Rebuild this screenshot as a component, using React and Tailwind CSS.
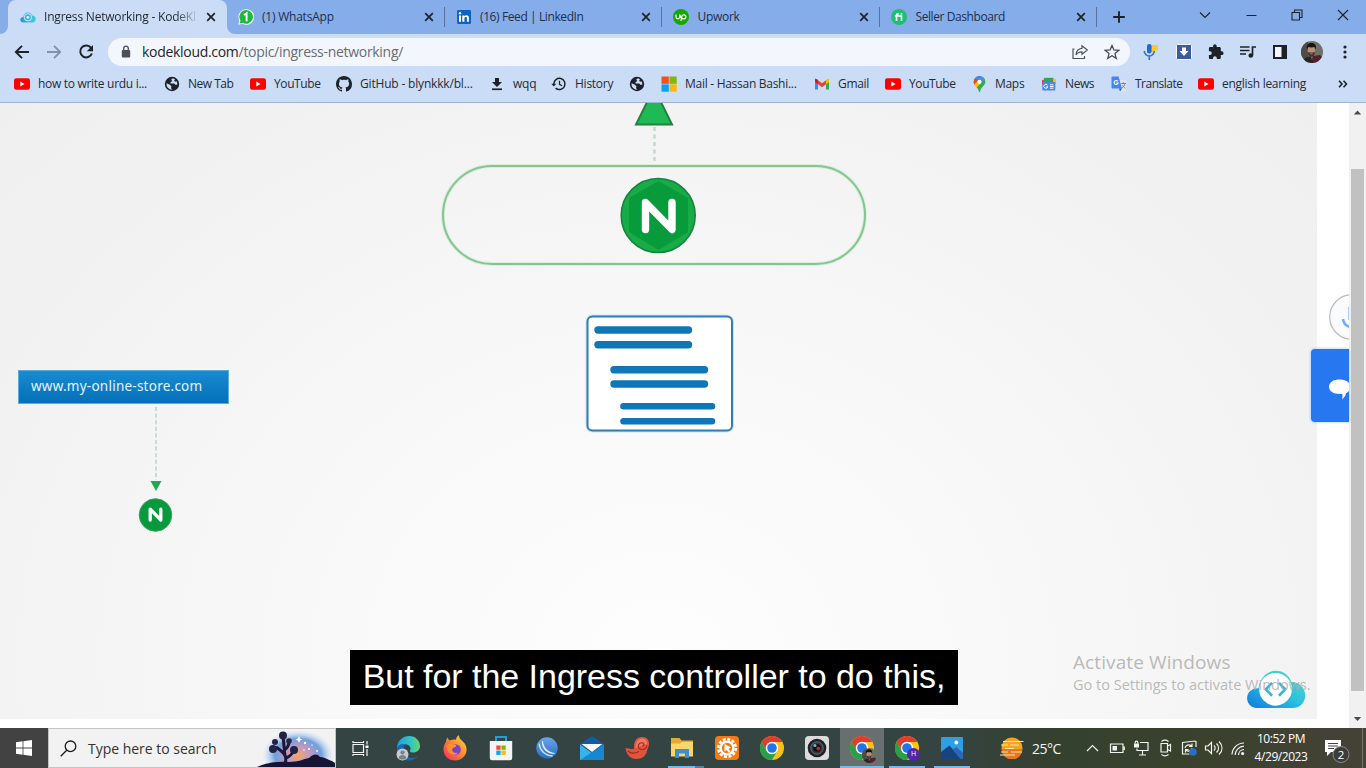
import React from "react";

const INK = "#1d2229";

function YouTube() {
  return (
    <svg width="16" height="16" viewBox="0 0 16 16">
      <rect y="2.2" width="16" height="11.6" rx="2.2" fill="#f00" />
      <path d="M6.3 5.6v4.8l4.2-2.4z" fill="#fff" />
    </svg>
  );
}

function Globe() {
  return (
    <svg width="16" height="16" viewBox="0 0 16 16">
      <circle cx="8" cy="8" r="7.2" fill={INK} />
      <path d="M8.500 2.300c1.500 0 3 .6 3.900 1.700-.4.900-1.400 1-1.900 1.700-.3.900-1.500.9-1.500 1.900.2.800 1.400.7 1.800 1.300" fill="none" stroke="#cbdcf6" strokeWidth="0" />
      <path d="M9 2.300 7.200 3.500l1 1.500-1.700 1.300v1.200h3.700l1.200 1.300h1.800a5.500 5.500 0 0 0-.6-3.600l-1.500.6-1-1.200 1-1.200z" fill="#cbdcf6" />
      <path d="M2.500 7.300 6 8.800l1.500 1.700-.5 1.300 1 1.900A5.700 5.700 0 0 1 2.500 7.300z" fill="#cbdcf6" />
    </svg>
  );
}

function GitHub() {
  return (
    <svg width="16" height="16" viewBox="0 0 16 16">
      <path fill={INK} d="M8 0C3.58 0 0 3.58 0 8c0 3.54 2.29 6.53 5.47 7.59.4.07.55-.17.55-.38 0-.19-.01-.82-.01-1.49-2.010.37-2.530-.49-2.690-.94-.09-.23-.48-.94-.82-1.130-.28-.15-.68-.52-.01-.53.63-.01 1.080.58 1.230.82.72 1.210 1.870.87 2.330.66.07-.52.28-.87.51-1.070-1.780-.2-3.640-.89-3.640-3.950 0-.87.31-1.590.82-2.150-.08-.2-.36-1.020.08-2.120 0 0 .67-.21 2.200.82.64-.18 1.320-.27 2-.27s1.360.09 2 .27c1.530-1.040 2.200-.82 2.200-.82.44 1.100.16 1.920.08 2.120.51.56.82 1.270.82 2.150 0 3.070-1.870 3.750-3.650 3.950.29.25.54.73.54 1.480 0 1.070-.01 1.930-.01 2.200 0 .21.15.46.55.38A8.010 8.010 0 0 0 16 8c0-4.420-3.580-8-8-8z" />
    </svg>
  );
}

function Download() {
  return (
    <svg width="14" height="16" viewBox="0 0 14 16">
      <path d="M5 2h4v4h3L7 11 2 6h3z" fill={INK} />
      <rect x="2" y="12.400" width="10" height="1.700" fill={INK} />
    </svg>
  );
}

function History() {
  return (
    <svg width="16" height="16" viewBox="0 0 16 16" fill="none" stroke={INK} strokeWidth="1.500">
      <path d="M2.800 8A5.600 5.600 0 1 1 4.600 12.100" />
      <path d="M8.500 4.800v3.500l2.500 1.500" strokeWidth="1.300" />
      <path d="M.3 7.700h5L2.800 10.400z" fill={INK} stroke="none" />
    </svg>
  );
}

function Microsoft() {
  return (
    <svg width="16" height="16" viewBox="0 0 16 16">
      <path d="M.5.5h7.300v7.300H.5z" fill="#f1511b" />
      <path d="M8.400.5h7.300v7.300H8.400z" fill="#80bb03" />
      <path d="M.5 8.400h7.300v7.300H.5z" fill="#00a4ef" />
      <path d="M8.400 8.400h7.300v7.300H8.400z" fill="#fbb70a" />
    </svg>
  );
}

function Gmail() {
  return (
    <svg width="16" height="16" viewBox="0 0 16 16">
      <path d="M1 4v9.500h3V6z" fill="#4285f4" />
      <path d="M15 4v9.500h-3V6z" fill="#34a853" />
      <path d="M12 3.700 15 2.600V6l-3 2.200z" fill="#fbbc04" />
      <path d="M4 3.700 1 2.600V6l3 2.200z" fill="#c5221f" />
      <path d="M4 4.200 8 7.200l4-3v4L8 11.200l-4-3z" fill="#ea4335" />
    </svg>
  );
}

function Maps() {
  return (
    <svg width="13" height="16" viewBox="0 0 13 16">
      <path d="M6.500 0A5.800 5.800 0 0 0 .7 5.900C.7 9.600 5 10.500 5.800 15.300c.2.900 1.200.9 1.400 0C8 10.500 12.300 9.600 12.300 5.900A5.800 5.800 0 0 0 6.500 0z" fill="#34a853" />
      <path d="M6.500 0A5.800 5.800 0 0 0 2 2.300l3 2.400L8.500.4z" fill="#4285f4" />
      <path d="M2 2.300A5.800 5.800 0 0 0 1.400 8.500l3.700-4z" fill="#ea4335" />
      <path d="M1.400 8.500c.6 1.100 1.500 2 2.200 3L8.300 7 5 4.600z" fill="#fbbc04" />
      <path d="M8.500.4A5.800 5.800 0 0 1 11.700 3.200L8.300 7 5.500 3.900z" fill="#4f8df5" />
      <circle cx="6.500" cy="5.800" r="2.100" fill="#fff" />
    </svg>
  );
}

function News() {
  return (
    <svg width="16" height="16" viewBox="0 0 16 16">
      <path d="M3 1.800h9.500v5H3z" fill="#34a853" />
      <path d="M10 3.300h5v5h-5z" fill="#fbbc04" />
      <path d="M1 4l11-.5v5H1z" fill="#ea4335" />
      <path d="M2.500 3.500l9-.7v2.700h-9z" fill="#2fa36b" />
      <rect x="1.300" y="6" width="13" height="8.500" rx="1" fill="#4b86e8" />
      <path d="M6.500 9.100A2 2 0 1 0 6.800 10.800H5.200M9 8.800h3.500M9 10.500h3.500M9 12.200h3.500" stroke="#fff" fill="none" />
    </svg>
  );
}

function Translate() {
  return (
    <svg width="16" height="16" viewBox="0 0 16 16">
      <path d="M6 4h8.500a1 1 0 0 1 1 1v9.500a1 1 0 0 1-1 1H9z" fill="#dfe3ea" />
      <path d="M1 .5h6.500l3.500 12H1.500a1 1 0 0 1-1-1V1.500z" fill="#4285f4" />
      <path d="M8 12.500h3L9 15.500z" fill="#2a56c6" />
      <path d="M6.800 5.400A2 2 0 1 0 7.100 7H5.300" stroke="#fff" fill="none" strokeWidth="1.100" />
      <path d="M10 7.500h5M12.500 6.300v1.200M14 7.500c-.5 2-1.500 3.500-3 4.500M11.500 9c.6 1.200 1.500 2.500 3 3.300" stroke="#73808f" fill="none" strokeWidth=".9" />
    </svg>
  );
}

function CloudLogo({ size, id }) {
  return (
    <svg width={size} height={size * 0.66} viewBox="0 0 60 40">
      <defs>
        <linearGradient id={id} x1="0" y1="1" x2="1" y2="0">
          <stop offset="0" stopColor="#1478de" />
          <stop offset=".5" stopColor="#27bfe0" />
          <stop offset="1" stopColor="#62dfc0" />
        </linearGradient>
      </defs>
      <path d="M12 38.500C5 38.500.8 34 .8 28.500c0-6 5-10.500 11.500-10C14 8 21 .8 30 .8c7.500 0 13 4.500 15.500 11.200C54 12 59.500 18 59.500 25.500c0 7.500-5.500 13-13 13z" fill={`url(#${id})`} />
      <circle cx="29.500" cy="19.500" r="16.500" fill="#fff" />
      <path d="M26 13 19.700 19.500l6.300 6.500M33 13 39.300 19.500 33 26" fill="none" stroke="#3bb3d9" strokeWidth="2.600" />
    </svg>
  );
}

function TabCloud() {
  return (
    <svg width="16" height="11" viewBox="0 0 16 11">
      <defs>
        <linearGradient id="tabCloud">
          <stop offset="0" stopColor="#2a93e2" />
          <stop offset="1" stopColor="#45d0d6" />
        </linearGradient>
      </defs>
      <path d="M3.300 10.500C1.300 10.500.3 9.200.3 7.700.3 6 1.600 4.900 3.300 5 3.700 2.200 5.500.4 8 .4c2 0 3.500 1.200 4.200 3 2.200 0 3.600 1.600 3.600 3.500 0 2.100-1.500 3.600-3.600 3.600z" fill="url(#tabCloud)" />
      <circle cx="7.900" cy="5.300" r="3.700" fill="#3fb4e0" stroke="#c9ecf6" />
      <circle cx="7.900" cy="5.300" r="1.400" fill="#e2f5fb" />
    </svg>
  );
}

function WhatsApp() {
  return (
    <svg width="16" height="16" viewBox="0 0 16 16">
      <path d="M8.200.2a7.800 7.800 0 1 1-3.700 14.500L.2 15.800l1.200-4A7.800 7.800 0 0 1 8.200.2z" fill="#e9fbee" />
      <path d="M8.200 1.100a6.800 6.800 0 1 1-3.600 12.600l-3 .8.900-2.900A6.800 6.800 0 0 1 8.200 1.100z" fill="#1fb83b" />
      <path d="M6 6 8.600 4.200v8" fill="none" stroke="#fff" strokeWidth="1.900" />
    </svg>
  );
}

function LinkedIn() {
  return (
    <svg width="16" height="16" viewBox="0 0 16 16">
      <rect x="1" y="1" width="14" height="14" rx="1.200" fill="#0a66c2" />
      <path d="M3 6.400h2v6.400H3zM6.300 6.400h2v.9c.4-.7 1.100-1.100 2-1.100 2 0 2.600 1.200 2.600 3v3.600h-2V9.500c0-.9-.2-1.500-1.100-1.500-1 0-1.400.7-1.400 1.600v3.200h-2.100z" fill="#fff" />
      <circle cx="4" cy="4.300" r="1.200" fill="#fff" />
    </svg>
  );
}

function Upwork() {
  return (
    <svg width="16" height="16" viewBox="0 0 16 16">
      <circle cx="8" cy="8" r="8" fill="#14a800" />
      <path d="M3 5.500V8a1.800 1.800 0 0 0 3.600 0V5.500C7.200 8 8 9.300 9.800 9.700A2.100 2.100 0 1 0 8.700 7.800L8 12" fill="none" stroke="#fff" strokeWidth="1.200" />
    </svg>
  );
}

function Fiverr() {
  return (
    <svg width="16" height="16" viewBox="0 0 16 16">
      <circle cx="8" cy="8" r="8" fill="#1dbf73" />
      <path d="M3.800 7h6.700v5M5.500 12V6.300C5.500 5 6.300 4.600 8 4.700" fill="none" stroke="#fff" strokeWidth="1.600" />
      <circle cx="10.500" cy="4.700" r="1" fill="#fff" />
    </svg>
  );
}

function Close() {
  return (
    <svg width="16" height="16" viewBox="0 0 16 16" className="shrink-0">
      <path d="M4.200 4.200l7.600 7.600M11.800 4.200l-7.600 7.600" stroke={INK} strokeWidth="1.700" />
    </svg>
  );
}

function Tab({ icon, title, track }) {
  return (
    <div className="flex h-[34px] w-[217.500px] shrink-0 items-center pl-[11px]">
      <span className="w-4 shrink-0">{icon}</span>
      <span className={"ml-2 flex-1 whitespace-nowrap text-xs text-[#20304c] " + track}>{title}</span>
      <Close />
      <span className="ml-[7px] h-[20px] w-px bg-[#57719e]" />
    </div>
  );
}

function TabStrip() {
  return (
    <div className="flex h-[34px] bg-[#85ade9]">
      <div className="flex w-2 items-end bg-[#cbdcf6]">
        <div className="h-[34px] w-2 rounded-br-lg bg-[#85ade9]" />
      </div>
      <div className="flex h-[34px] w-[219px] items-center rounded-t-lg bg-[#cbdcf6] pl-3">
        <TabCloud />
        <span className="ml-2 w-[155px] whitespace-nowrap bg-gradient-to-r from-[#20262f] from-85% to-transparent bg-clip-text text-xs tracking-[-0.200px] text-transparent">
          Ingress Networking - KodeKl
        </span>
        <span className="ml-1">
          <Close />
        </span>
      </div>
      <div className="-mr-[0.500px] flex bg-[#cbdcf6]">
        <div className="flex h-[34px] rounded-bl-lg bg-[#85ade9]">
          <Tab icon={<WhatsApp />} title="(1) WhatsApp" track="tracking-[-0.220px]" />
          <Tab icon={<LinkedIn />} title="(16) Feed | LinkedIn" track="tracking-[-0.400px] pl-[0.500px]" />
          <Tab icon={<Upwork />} title="Upwork" track="tracking-[-0.300px] pl-[0.500px]" />
          <Tab icon={<Fiverr />} title="Seller Dashboard" track="tracking-[-0.420px] pl-px" />
        </div>
      </div>
      <div className="flex flex-1 items-center pl-[15px]">
        <svg width="14" height="14" viewBox="0 0 14 14">
          <path d="M7 1.200v11.600M1.200 7h11.600" stroke={INK} strokeWidth="1.900" />
        </svg>
        <svg className="mb-[5px] ml-[73px]" width="12" height="10" viewBox="0 0 12 10">
          <path d="M1 2.500l5 5 5-5" fill="none" stroke={INK} strokeWidth="1.100" />
        </svg>
        <svg className="mb-[5px] ml-[35px]" width="11" height="10" viewBox="0 0 11 10">
          <path d="M.5 5.500h10" stroke={INK} />
        </svg>
        <svg className="mb-[5px] ml-[34px]" width="12" height="12" viewBox="0 0 12 12" fill="none" stroke={INK} strokeWidth="1.100">
          <path d="M1 3.500h7.500V11H1zM3.500 3.500V1H11v7.500H8.500" />
        </svg>
        <svg className="mb-[5px] ml-[34px]" width="12" height="12" viewBox="0 0 12 12">
          <path d="M1 1l10 10M11 1 1 11" stroke={INK} strokeWidth="1.100" />
        </svg>
      </div>
    </div>
  );
}

function Slot({ w, children }) {
  return <span className={"flex shrink-0 items-center justify-center " + w}>{children}</span>;
}

function Toolbar() {
  return (
    <div className="flex h-[35px] items-center bg-[#cbdcf6] pl-[6px]">
      <Slot w="w-8">
        <svg width="16" height="16" viewBox="0 0 16 16" fill="none" stroke={INK} strokeWidth="1.900">
          <path d="M15 8H2M8 1.800 1.800 8 8 14.200" />
        </svg>
      </Slot>
      <Slot w="w-8">
        <svg width="16" height="16" viewBox="0 0 16 16" fill="none" stroke="#8591a8" strokeWidth="1.900">
          <path d="M1 8h13M8 1.800 14.200 8 8 14.200" />
        </svg>
      </Slot>
      <Slot w="w-8">
        <svg width="16" height="16" viewBox="0 0 16 16" fill="none" stroke={INK} strokeWidth="2">
          <path d="M13 3.700A6 6 0 1 0 13.900 9.500" />
          <path d="M15 1v6.200H8.800z" fill={INK} stroke="none" />
        </svg>
      </Slot>
      <div className="ml-[6px] flex h-7 w-[1022px] items-center rounded-full bg-[#f3f7fd] pl-[13px]">
        <svg width="10" height="14" viewBox="0 0 10 14">
          <rect x=".8" y="5" width="8.400" height="7.500" rx="1" fill="#4c5056" />
          <path d="M2.700 5.500V3.400a2.300 2.300 0 0 1 4.600 0v2.100" fill="none" stroke="#4c5056" strokeWidth="1.300" />
        </svg>
        <span className="ml-[11px] flex-1 text-[14px] tracking-[-0.300px] text-[#666c75]">
          <span className="text-[#1f2329]">kodekloud.com</span>/topic/ingress-networking/
        </span>
        <svg width="18" height="16" viewBox="0 0 18 16" fill="none" stroke="#4d545f" strokeWidth="1.200">
          <path d="M3.500 5H2v9.500h11.500V12" />
          <path d="M11 1.800 16.300 6 11 10.200V7.800C8 7.800 6.200 8.800 5 11c.2-4 2.500-6.400 6-6.700z" />
        </svg>
        <svg className="ml-[15px] mr-[10px]" width="16" height="16" viewBox="0 0 16 16" fill="none" stroke="#454c57" strokeWidth="1.300">
          <path d="M8 1.500l1.900 4.500 4.800.4-3.700 3.200 1.200 4.700L8 11.700l-4.200 2.600L5 9.600 1.300 6.400 6.100 6z" />
        </svg>
      </div>
      <span className="ml-[5px] flex">
        <Slot w="w-8">
          <svg width="16" height="16" viewBox="0 0 16 16">
            <path d="M8 1h7v5.500h-3L9.500 9z" fill="#fbc926" />
            <rect x="4" y="0" width="4.600" height="9.500" rx="2.300" fill="#1d69d8" />
            <path d="M1.300 7a5 5 0 0 0 10 0M6.300 12v4" fill="none" stroke="#2b72d6" strokeWidth="1.600" />
          </svg>
        </Slot>
        <Slot w="w-[33px]">
          <svg width="16" height="16" viewBox="0 0 16 16">
            <rect x=".5" y=".5" width="15" height="15" rx="1" fill="#3d5b9c" stroke="#f2f5fa" />
            <path d="M6 3.500h4V7h2.500L8 12 3.500 7H6z" fill="#fff" />
          </svg>
        </Slot>
        <Slot w="w-8">
          <svg width="16" height="16" viewBox="0 0 16 16">
            <path fill={INK} d="M13.700 7.300h-.9V4.500c0-.8-.6-1.400-1.400-1.400H8.700v-1a1.800 1.800 0 0 0-3.600 0v1H2.300C1.500 3.100.9 3.700.9 4.500v2.700h1a1.900 1.900 0 0 1 0 3.800h-1v2.700c0 .8.600 1.400 1.400 1.400H5v-1a1.900 1.900 0 0 1 3.800 0v1h2.600c.8 0 1.400-.6 1.400-1.400V11h.9a1.850 1.850 0 0 0 0-3.700z" />
          </svg>
        </Slot>
        <Slot w="w-8">
          <svg width="16" height="14" viewBox="0 0 16 14" fill="none" stroke={INK} strokeWidth="1.700">
            <path d="M0 2h9.500M0 5.500h9.500M0 9h6M12.500 10.500V2H16" />
            <circle cx="10.800" cy="10.500" r="1.500" fill={INK} />
          </svg>
        </Slot>
        <Slot w="w-8">
          <svg width="14" height="14" viewBox="0 0 14 14">
            <rect x="1" y="1" width="12" height="12" fill="#f3f7fd" stroke={INK} strokeWidth="2" />
            <rect x="8.500" y="1" width="5" height="12" fill={INK} />
          </svg>
        </Slot>
        <Slot w="w-8">
          <Portrait size={22} id="avatar" />
        </Slot>
        <Slot w="w-[33px]">
          <svg width="4" height="16" viewBox="0 0 4 16" fill={INK}>
            <circle cx="2" cy="3" r="1.600" />
            <circle cx="2" cy="8" r="1.600" />
            <circle cx="2" cy="13" r="1.600" />
          </svg>
        </Slot>
      </span>
    </div>
  );
}

function Portrait({ size, id }) {
  return (
    <svg width={size} height={size} viewBox="0 0 22 22">
      <clipPath id={id}>
        <circle cx="11" cy="11" r="11" />
      </clipPath>
      <g clipPath={`url(#${id})`}>
        <rect width="22" height="22" fill="#6d7167" />
        <path d="M0 0h7v22H0z" fill="#4d4c44" />
        <path d="M12 15l7-1 3 3v6H10z" fill="#54202b" />
        <path d="M2 22c0-4 2.500-6.500 7.500-6.500l3 6.500z" fill="#2a2524" />
        <ellipse cx="10.300" cy="9.500" rx="3.700" ry="5.200" fill="#b98f7c" />
        <path d="M6 8.500C5 3.500 7.500 2 10.500 2c3.500 0 5.300 2.500 4.200 6.500l-1.200-2.500c-2 .5-4.300.5-6.300 0z" fill="#171516" />
        <path d="M6.800 11c1 .8 2.300.5 3.500.5s2.700.2 3.600-.7c0 3-1.400 5-3.700 5-2.100 0-3.400-2-3.400-4.800z" fill="#43332e" />
        <path d="M8.900 12.800h2.800" stroke="#b67f72" strokeWidth=".9" />
      </g>
    </svg>
  );
}

const BOOKMARKS = [
  { icon: <YouTube />, label: "how to write urdu i...", w: "w-[150px]", t: "tracking-[-0.300px]" },
  { icon: <Globe />, label: "New Tab", w: "w-[86px]", t: "tracking-[-0.500px]" },
  { icon: <YouTube />, label: "YouTube", w: "w-[86px]", t: "tracking-[-0.400px]" },
  { icon: <GitHub />, label: "GitHub - blynkkk/bl...", w: "w-[153px]", t: "tracking-[-0.180px]" },
  { icon: <Download />, label: "wqq", w: "w-[62px]", t: "tracking-[-0.200px]" },
  { icon: <History />, label: "History", w: "w-[78px]", t: "tracking-[-0.250px]" },
  { icon: <Globe />, label: "", w: "w-[32px]", t: "tracking-[0px]" },
  { icon: <Microsoft />, label: "Mail - Hassan Bashi...", w: "w-[153px]", t: "tracking-[-0.280px]" },
  { icon: <Gmail />, label: "Gmail", w: "w-[71px]", t: "tracking-[-0.300px]" },
  { icon: <YouTube />, label: "YouTube", w: "w-[86px]", t: "tracking-[-0.400px]" },
  { icon: <Maps />, label: "Maps", w: "w-[70px]", t: "tracking-[-0.300px]" },
  { icon: <News />, label: "News", w: "w-[70px]", t: "tracking-[-0.400px]" },
  { icon: <Translate />, label: "Translate", w: "w-[87px]", t: "tracking-[-0.500px]" },
  { icon: <YouTube />, label: "english learning", w: "w-[140px]", t: "tracking-[-0.280px]" },
];

function Bookmarks() {
  return (
    <div className="flex h-[34px] items-center border-b border-[#9fb2d4] bg-[#cbdcf6] pb-[3px] pl-[14px]">
      {BOOKMARKS.map((b, i) => (
        <div key={i} className={"flex shrink-0 items-center gap-2 " + b.w}>
          <span className="flex w-4 shrink-0 justify-center">{b.icon}</span>
          <span className={"whitespace-nowrap text-xs text-[#252b35] " + b.t}>{b.label}</span>
        </div>
      ))}
      <svg width="10" height="8" viewBox="0 0 10 8" fill="none" stroke={INK} strokeWidth="1.600">
        <path d="M1 .8 4 4 1 7.200M5.500.8l3 3.200-3 3.200" />
      </svg>
    </div>
  );
}

function Slide() {
  return (
    <div className="relative h-[616px] w-[1317px] overflow-hidden bg-[radial-gradient(ellipse_at_50%_90%,#fdfdfd_0%,#f8f8f8_40%,#f2f2f2_75%,#efefef_100%)]">
      <svg className="absolute inset-0" width="1317" height="616" viewBox="0 103 1317 616">
        <path d="M654 88 672 124.500H636z" fill="#1fb955" stroke="#24803f" strokeWidth="2" />
        <path d="M654.500 127v38" stroke="#bfdccb" strokeWidth="2.500" strokeDasharray="4 3.500" />
        <rect x="443" y="166" width="422" height="98" rx="49" fill="none" stroke="#d9efdb" strokeWidth="4" />
        <rect x="443" y="166" width="422" height="98" rx="49" fill="none" stroke="#86c592" strokeWidth="2" />
        <circle cx="658.200" cy="215.500" r="37" fill="#18ac47" stroke="#178340" strokeWidth="1.600" />
        <path d="M658.500 181 688 198v34l-29.500 18L629 232v-34z" fill="#089b3c" />
        <path d="M645.500 229.500V202.500L672 229.500V202.500" fill="none" stroke="#fff" strokeWidth="7.400" strokeLinecap="round" strokeLinejoin="round" />
        <rect x="587.500" y="316.500" width="144.500" height="114" rx="5" fill="#fff" stroke="#c5e4f5" strokeWidth="4" />
        <rect x="587.500" y="316.500" width="144.500" height="114" rx="5" fill="#fff" stroke="#337db2" strokeWidth="2" />
        <g stroke="#0f76b8" strokeLinecap="round">
          <path d="M598 330h90.500M598 344.700h90.500M614 369.800h90.500M614 384h90.500" strokeWidth="7.400" />
          <path d="M623.500 406.200h88.500M623.500 421.300h88.500" strokeWidth="6.600" />
        </g>
        <path d="M156 407v73" stroke="#c6d9d0" strokeWidth="1.800" strokeDasharray="4 2.600" />
        <path d="M150.500 481h11L156 491z" fill="#20a94f" />
        <circle cx="155.500" cy="515" r="16.300" fill="#079a3c" stroke="#3f9e60" />
        <path d="M150.200 520v-10.800l10.600 10.800v-10.800" fill="none" stroke="#fff" strokeWidth="3.300" strokeLinecap="round" strokeLinejoin="round" />
      </svg>
      <div className="absolute left-[18px] top-[267px] flex h-[34px] w-[211px] items-center border border-[#5caade] bg-gradient-to-b from-[#188bd1] to-[#0470b9] pb-px pl-3 font-['Noto_Sans','Open_Sans',sans-serif] text-[13.500px] tracking-[0.240px] text-[#e4f3fc]">
        www.my-online-store.com
      </div>
      <div className="absolute left-[350px] top-[547px] flex h-[55px] w-[608px] items-center justify-center whitespace-nowrap bg-black pb-[2px] font-['Liberation_Sans',Arial,sans-serif] text-[34px] tracking-[-0.030px] text-white">
        But for the Ingress controller to do this,
      </div>
      <div className="absolute left-[1246px] top-[567px]">
        <CloudLogo size={60} id="bigCloud" />
      </div>
      <div className="absolute left-[1073px] top-[546px] whitespace-nowrap text-[#a9a9a9]/80">
        <div className="text-[19px] leading-[26px] tracking-[0.100px]">Activate Windows</div>
        <div className="text-[14.500px] leading-[20px] tracking-[0px]">Go to Settings to activate Windows.</div>
      </div>
    </div>
  );
}

function SideWidgets() {
  return (
    <div className="relative w-8 bg-white">
      <div className="absolute right-0 top-[191px] w-5 overflow-hidden">
        <svg width="20" height="46" viewBox="0 0 20 46">
          <circle cx="23" cy="23" r="22.300" fill="#fafbfc" stroke="#b9bbbe" strokeWidth="1.200" />
          <path d="M14 25c.5 4 3 7 7 8" fill="none" stroke="#75aaf7" strokeWidth="2.500" />
          <path d="M19.600 13v13" stroke="#a9c9fa" strokeWidth="1" />
        </svg>
      </div>
      <div className="absolute right-0 top-[246px] flex h-[73px] w-[38px] items-center justify-end rounded-l bg-[#2778f0] pt-[6px] shadow-[0_0_3px_#8db7f4]">
        <svg width="20" height="22" viewBox="0 0 20 22">
          <path d="M11 1.500c6 0 10.500 3 10.500 7.500 0 3-2 5-4.500 6.200-.2 1.800-1.500 4-4 6.300.5-1.500.6-3.500.3-5.500H11C4.500 16 0 13.500 0 8.800S4.500 1.500 11 1.500z" fill="#fff" />
        </svg>
      </div>
    </div>
  );
}

function Scrollbar() {
  return (
    <div className="flex w-[17px] flex-col items-center bg-[#f1f1f1]">
      <svg className="mt-[6px]" width="9" height="6" viewBox="0 0 9 6">
        <path d="M.8 5.500 4.500 1.500l3.700 4z" fill="#4b4b4b" />
      </svg>
      <div className="mt-[54px] h-[522px] w-[13px] bg-[#c1c1c1]" />
      <svg className="mt-[25px]" width="9" height="6" viewBox="0 0 9 6">
        <path d="M.8 1 4.500 5l3.700-4z" fill="#4b4b4b" />
      </svg>
    </div>
  );
}

function Chrome() {
  return (
    <svg width="24" height="24" viewBox="0 0 24 24">
      <circle cx="12" cy="12" r="12" fill="#fbc116" />
      <path d="M1.600 6A12 12 0 0 1 22.400 6H12L6.800 15z" fill="#e33b2e" />
      <path d="M1.600 6A12 12 0 0 0 12 24l5.200-9H6.800z" fill="#26a148" />
      <circle cx="12" cy="12" r="6.200" fill="#fff" />
      <circle cx="12" cy="12" r="4.800" fill="#2374e6" />
    </svg>
  );
}

function SearchArt() {
  return (
    <svg width="78" height="38" viewBox="0 0 78 38">
      <defs>
        <radialGradient id="sky">
          <stop offset="0" stopColor="#f5a95f" />
          <stop offset=".3" stopColor="#c899bd" />
          <stop offset=".65" stopColor="#6fa0de" />
          <stop offset="1" stopColor="#c9dff7" stopOpacity="0" />
        </radialGradient>
      </defs>
      <ellipse cx="41" cy="26" rx="36" ry="25" fill="url(#sky)" />
      <path d="M0 38c8-4 20-6 32-5 10 0 14-3 20-4 4-4 8-5 11-1 5 0 8 3 12 4l3 2v4z" fill="#171333" />
      <path d="M28 35c2-7 1-10-9-17M29 29c5-2 7-5 8-9M28 27c-1-7-1-12-2-20M27 21c4-2 5-5 5-9" stroke="#1b1738" strokeWidth="3" fill="none" />
      <g fill="#222347">
        <circle cx="26" cy="6.500" r="4" />
        <circle cx="18" cy="13" r="3" />
        <circle cx="32" cy="12" r="2.800" />
        <circle cx="16" cy="20" r="4" />
        <circle cx="37" cy="21" r="4" />
      </g>
      <g fill="#fff">
        <path d="M42 7l1 2.500 2.500 1-2.500 1-1 2.500-1-2.500-2.500-1 2.500-1z" />
        <circle cx="48" cy="14" r="1.200" />
        <circle cx="52" cy="20" r="1" />
        <circle cx="47" cy="21" r=".8" />
        <circle cx="60" cy="22" r=".9" />
        <circle cx="55" cy="16" r=".7" />
      </g>
    </svg>
  );
}

function Edge() {
  return (
    <svg width="26" height="26" viewBox="0 0 26 26">
      <defs>
        <linearGradient id="edgeTop">
          <stop offset="0" stopColor="#1e9de0" />
          <stop offset=".6" stopColor="#33c6c0" />
          <stop offset="1" stopColor="#63d66a" />
        </linearGradient>
      </defs>
      <path d="M2 12C3 5 8 1 14 1c7 0 11 5 11 10 0 4-3 6.500-7 6.500-3 0-4-1.500-2.500-3 .5-3-2-5-5-5C6 9.500 3 12 2 16z" fill="url(#edgeTop)" />
      <path d="M2 13c2-4 6-4.500 9-3.500-4 3-4 9 2 12.500 4 1.500 7 1 10.500-1.500C21 24 17.500 25.500 14 25.500 7 25.500 1 20 2 13z" fill="#1668b8" />
      <circle cx="7.500" cy="19.500" r="6" fill="#c6cbce" />
      <circle cx="7.500" cy="17.500" r="2.100" fill="#7a8288" />
      <path d="M3.700 23c.3-2 2-3 3.800-3s3.500 1 3.800 3c-2 2-5.500 2-7.600 0z" fill="#7a8288" />
    </svg>
  );
}

function Firefox() {
  return (
    <svg width="24" height="26" viewBox="0 0 24 26">
      <defs>
        <linearGradient id="fx" x1="1" y1="0" x2="0" y2="1">
          <stop offset="0" stopColor="#ffe34a" />
          <stop offset=".45" stopColor="#ff8a2a" />
          <stop offset="1" stopColor="#f5266c" />
        </linearGradient>
      </defs>
      <path d="M3 7c0-2 .5-3.500 1.500-4.500C5 4 6 5 7 5.500c2-1.300 4-1.300 6-.8C13 3 14 1.300 16 .3c0 3 1.500 4 3.500 6C22.500 9 24 12 23.500 16c-.8 5.500-5.500 9.500-11.500 9.500C5.500 25.500.5 21 .5 14.500.5 11.500 1.500 9 3 7z" fill="url(#fx)" />
      <circle cx="12.500" cy="14.500" r="5.300" fill="#7743ce" />
      <path d="M3.500 10c3-2 5-1.500 8-.5 1.500.4 2 1.200 1.500 2-1.500 1.500-3.500 1-4 3 .3 3 3.500 4 6 3-3 4-9 2-10.500-2z" fill="#ff8e2e" />
    </svg>
  );
}

function Store() {
  return (
    <svg width="24" height="26" viewBox="0 0 24 26">
      <path d="M7 7V2h10v5" fill="none" stroke="#2a9bd4" strokeWidth="2" />
      <path d="M.8 6h22.400v17a2.300 2.300 0 0 1-2.300 2.300H3.100A2.300 2.300 0 0 1 .8 23z" fill="#f4f4f4" />
      <path d="M7.300 10.500h4.300v4.300H7.300z" fill="#f05022" />
      <path d="M12.400 10.500h4.300v4.300h-4.300z" fill="#7fb900" />
      <path d="M7.300 15.600h4.300v4.300H7.300z" fill="#08a4ee" />
      <path d="M12.400 15.600h4.300v4.300h-4.300z" fill="#fdb813" />
    </svg>
  );
}

function BlueOrb() {
  return (
    <svg width="22" height="24" viewBox="0 0 22 24">
      <defs>
        <linearGradient id="orb" x1="0" y1="0" x2="0" y2="1">
          <stop offset="0" stopColor="#6aa5ea" />
          <stop offset="1" stopColor="#286dc4" />
        </linearGradient>
      </defs>
      <circle cx="11" cy="12" r="10.700" fill="url(#orb)" />
      <path d="M6.500 5C7 11 11 16 18.500 17.500 12 18 5.500 13 6.500 5z" fill="#fff" stroke="#eef5fd" strokeWidth=".6" />
      <path d="M3 7.500C4 14.500 9 19.500 16.500 20" fill="none" stroke="#dbe9fa" strokeWidth="1.300" />
    </svg>
  );
}

function Mail() {
  return (
    <svg width="24" height="26" viewBox="0 0 24 26">
      <path d="M0 9 12 1l12 8v4H0z" fill="#0d5ca8" />
      <path d="M0 9.500 12 18 24 9.500V25H0z" fill="#36b4ee" />
      <path d="M0 25 24 9.500V25z" fill="#1587d3" />
      <path d="M1.500 9h21L12 17z" fill="#f5f9fc" />
    </svg>
  );
}

function Shell() {
  return (
    <svg width="25" height="26" viewBox="0 0 25 26">
      <path d="M.5 13c3 0 5 1.500 8.500 1C8.500 6 11.500 2 17 2c5 0 7.500 3.500 7 7.500-.6 3-1.500 4-2 6.500-1 5-5 8-10.500 8C5 24 1 19 .5 13z" fill="#e0533c" />
      <path d="M10.500 13C10.500 7 13 3.500 17 3.500c4 0 5.500 3 5 5.500z" fill="#ee7a62" />
      <path d="M22 10.500c-.5 2.500-2.500 4-5 4s-4-1.700-3.700-3.900S16 7.300 17.800 8s1.300 2.800-.3 3M3 16c3 3 7 2.500 11 .5" fill="none" stroke="#9c2c22" strokeWidth="1.200" />
    </svg>
  );
}

function Folder() {
  return (
    <svg width="22" height="24" viewBox="0 0 22 24">
      <path d="M0 2h8.500l2 2.500H22V20H0z" fill="#e2ac30" />
      <path d="M0 7.500h9L11 6h11v14.500H0z" fill="#f8d667" />
      <path d="M4 13h14v9h-4v-4.500H8V22H4z" fill="#3b8fd2" />
    </svg>
  );
}

function Gear() {
  return (
    <svg width="24" height="24" viewBox="0 0 24 24">
      <rect width="24" height="24" rx="4" fill="#f57a12" />
      <circle cx="12" cy="12" r="8.800" fill="none" stroke="#fff" strokeWidth="2.600" strokeDasharray="3 1.600" />
      <circle cx="12" cy="12" r="7.600" fill="#fff" />
      <circle cx="12" cy="12" r="5.200" fill="#f57a12" />
      <path d="M9.500 8 16 11.500l-2.500 1.300 2 2.700-1.800 1.200-2-2.700-2.200 1.500z" fill="#fff" />
    </svg>
  );
}

function Camera() {
  return (
    <svg width="24" height="24" viewBox="0 0 24 24">
      <rect width="24" height="24" rx="4" fill="#dcdcdc" />
      <circle cx="12" cy="12" r="9.300" fill="#1f2124" />
      <circle cx="12" cy="12" r="6.200" fill="#34363a" stroke="#6d7075" />
      <circle cx="12" cy="12" r="3.800" fill="#0d0f14" />
      <circle cx="13.300" cy="12.500" r="1.900" fill="#b52b31" />
      <circle cx="10" cy="9.500" r="1.500" fill="#71bdc9" />
    </svg>
  );
}

function Photos() {
  return (
    <svg width="22" height="24" viewBox="0 0 22 24">
      <rect y="1" width="22" height="22" rx="1" fill="#2f9ee4" />
      <path d="M0 16 8.500 9.500 20 23H0z" fill="#17437f" />
      <path d="M11.500 13.500 15.500 11 22 17v6h-2.500z" fill="#3165b5" />
      <circle cx="15.300" cy="6.500" r="1.900" fill="#fff" />
    </svg>
  );
}

function AppButton({ w, children, bar, active }) {
  return (
    <div className={"flex h-10 shrink-0 flex-col items-center " + w + (active ? " bg-[#67706f]" : "")}>
      <span className="flex flex-1 items-center">{children}</span>
      {bar}
    </div>
  );
}

function Tray() {
  return (
    <svg width="160" height="20" viewBox="1086 738 160 20" fill="none" stroke="#f3f3f3" strokeWidth="1.200">
      <path d="M1087 751l5.500-5.500 5.500 5.500" />
      <path d="M1110.500 744h12.500v8.500h-12.500zM1124.300 746.500v3.500" />
      <path d="M1112.500 746h4.500v4.500h-4.500z" fill="#f3f3f3" stroke="none" />
      <path d="M1140 742.500h8v8h-11v-2M1142.500 751v4M1139 755h7" />
      <path d="M1134 743.500h5v4h-5z" fill="#f3f3f3" stroke="none" />
      <path d="M1135.200 743.500v-1a1.300 1.300 0 0 1 2.600 0v1" />
      <path d="M1161 743.500h6.500v8.500h-6.500zM1167.500 746l3-1.500v6.500l-3-1.500M1161.500 741.500c2-1.500 5-1.500 7 0M1161.500 754.500c2 1.500 5 1.500 7 0" />
      <path d="M1182 742.500l13.500-1.500M1182.500 742.500v11.500h7M1196 741v6M1185 748c.5-3 4-4 6.500-2M1192 743.500v3h-3M1192 748c-.5 3-4 4-6 2M1185.500 752.500v-3h3" />
      <circle cx="1193" cy="752" r="3.800" fill="#2870bf" stroke="none" />
      <path d="M1205.500 746h2.500l3.500-3.500v11l-3.500-3.500h-2.500zM1214 745.500c1.500 1.500 1.500 3.500 0 5M1216.500 743.500c2.700 2.700 2.700 6.300 0 9M1219 741.500c4 4 4 9 0 13" />
      <path d="M1232 754.500a12 12 0 0 1 12-11.500M1235.200 755a9 9 0 0 1 8.800-8.800M1238.500 755a5.800 5.800 0 0 1 5.500-5.500" />
      <circle cx="1242.600" cy="753.500" r="1.600" fill="#f3f3f3" stroke="none" />
    </svg>
  );
}

function Taskbar() {
  return (
    <div className="flex h-10 items-center bg-[linear-gradient(90deg,#424242_0px,#424242_48px,#344442_336px,#344442_940px,#344130_1050px,#39412c_1190px,#454238_1366px)]">
      <div className="flex h-10 w-12 items-center justify-center">
        <svg width="16" height="16" viewBox="0 0 16 16" fill="#fff">
          <path d="M0 2.200 6.600 1.300v6.300H0zM7.400 1.200 16 0v7.600H7.400zM0 8.400h6.600v6.300L0 13.800zM7.400 8.400H16V16l-8.600-1.200z" />
        </svg>
      </div>
      <div className="flex h-10 w-72 items-center border border-[#c5c5c5] bg-[#f2f2f2] pl-[11px]">
        <svg width="17" height="17" viewBox="0 0 17 17" fill="none" stroke="#1d1d1d" strokeWidth="1.300">
          <circle cx="10.500" cy="6.300" r="5.300" />
          <path d="M6.700 10.200.7 16.200" />
        </svg>
        <span className="ml-[11px] flex-1 whitespace-nowrap text-[14px] tracking-[-0.020px] text-[#333]">Type here to search</span>
        <SearchArt />
      </div>
      <AppButton w="w-12">
        <svg width="17" height="17" viewBox="0 0 17 17" fill="none" stroke="#f2f2f2" strokeWidth="1.200">
          <path d="M1 4.500h10.500v8H1zM1 1v1.500h10.500V1M1 16v-1.500h10.500V16M15 1v3.500M15 9v7" />
          <path d="M13.500 5.500h3v2.500h-3z" fill="#fff" stroke="none" />
        </svg>
      </AppButton>
      <AppButton w="w-[48px]"><Edge /></AppButton>
      <AppButton w="w-[46px]"><Firefox /></AppButton>
      <AppButton w="w-[46px]"><Store /></AppButton>
      <AppButton w="w-[46px]"><BlueOrb /></AppButton>
      <AppButton w="w-[44px]"><Mail /></AppButton>
      <AppButton w="w-[46px]"><Shell /></AppButton>
      <AppButton w="w-[44px]" bar={<span className="-mt-[2px] ml-2 flex h-[2px] w-9"><i className="w-[27px] bg-[#76b9ed]" /><i className="w-[9px] bg-[#547f9f]" /></span>}>
        <Folder />
      </AppButton>
      <AppButton w="w-[46px]"><Gear /></AppButton>
      <AppButton w="w-[44px]"><Chrome /></AppButton>
      <AppButton w="w-[46px]"><Camera /></AppButton>
      <AppButton w="w-[44px]" active bar={<i className="-mt-[2px] h-[2px] w-full bg-[#76b9ed]" />}>
        <span className="relative">
          <Chrome />
          <span className="absolute -bottom-[3px] -right-[3px]">
            <Portrait size={15} id="miniAvatar" />
          </span>
        </span>
      </AppButton>
      <AppButton w="w-[46px]" bar={<i className="-mt-[2px] h-[2px] w-9 bg-[#76b9ed]" />}>
        <span className="relative">
          <Chrome />
          <span className="absolute -bottom-px -right-px flex h-[13px] w-[13px] items-center justify-center rounded-full bg-[#5126a8] text-[7px] text-white">H</span>
        </span>
      </AppButton>
      <AppButton w="w-[44px]" bar={<i className="-mt-[2px] h-[2px] w-9 bg-[#76b9ed]" />}><Photos /></AppButton>
      <div className="flex flex-1 items-center pl-[26px]">
        <svg width="24" height="22" viewBox="0 0 24 22">
          <circle cx="12" cy="11" r="10.500" fill="#f5a51d" />
          <path d="M1.500 12a10.500 10.500 0 0 0 21 0z" fill="#e5771c" />
          <path d="M3 4.500h20.500M1 8h7M10 8h9M5 11.500h9M1 15h7M11 15h11M0 18h15" stroke="#fbe3b5" strokeWidth="1.200" />
        </svg>
        <span className="ml-2 w-[54px] text-[14px] tracking-[-0.500px] text-[#f5f5f5]">25°C</span>
        <Tray />
        <div className="ml-[3px] w-[64px] whitespace-nowrap text-center text-xs leading-[18px] tracking-[-0.450px] text-white">
          <div>10:52 PM</div>
          <div>4/29/2023</div>
        </div>
        <svg className="ml-[11px] mt-[3px]" width="26" height="26" viewBox="0 0 26 26">
          <path d="M1 3h16v12H7l-4 4v-4H1z" fill="#fff" />
          <path d="M4 6.500h10M4 9h10M4 11.500h6" stroke="#444" />
          <circle cx="17" cy="17.500" r="8" fill="#3c3c3a" stroke="#8b8b86" />
          <text x="17" y="21.500" fontSize="11.500" textAnchor="middle" fill="#fff">2</text>
        </svg>
      </div>
      <span className="mr-[3px] h-10 w-px bg-[#77776e]" />
    </div>
  );
}

export default function App() {
  return (
    <div className="flex h-[768px] w-[1366px] flex-col overflow-hidden bg-white font-['Open_Sans','Noto_Sans',sans-serif]">
      <TabStrip />
      <Toolbar />
      <Bookmarks />
      <div className="flex h-[625px]">
        <Slide />
        <SideWidgets />
        <Scrollbar />
      </div>
      <Taskbar />
    </div>
  );
}
